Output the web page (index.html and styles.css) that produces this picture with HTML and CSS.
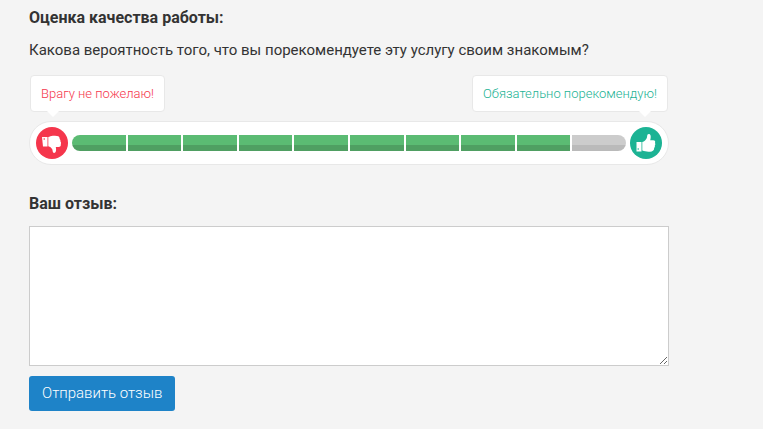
FILE: index.html
```html
<!DOCTYPE html>
<html lang="ru">
<head>
<meta charset="utf-8">
<meta name="viewport" content="width=device-width, initial-scale=1">
<title>Отзыв</title>
<link rel="stylesheet" href="styles.css">
</head>

<body>
<form class="review" action="#" method="post">
	<h2 class="review-title">Оценка качества работы:</h2>
	<p class="review-text" id="question">Какова вероятность того, что вы порекомендуете эту услугу своим знакомым?</p>

	<div class="hints">
		<span class="hint hint-bad">Врагу не пожелаю!</span>
		<span class="hint hint-good">Обязательно порекомендую!</span>
	</div>

	<div class="rate">
		<span class="thumb thumb-bad">
			<svg viewBox="0 0 32 32" width="32" height="32" aria-hidden="true">
				<path d="M6 10h5.500v9.500H7z"/>
				<path d="M12.300 10c1.500-.3 2.700-1.200 4.500-1.200 3 0 5.800 0 6.500 1.400.4.700.4 1.300.3 1.900.8.700 1 1.500.8 2.400.7.800.8 1.700.4 2.500.4 1.900-.6 2.900-2.300 2.900h-2.700c.3 1.600.5 3 0 4.700-.4 1.600-2.400 1.800-2.900.5-.4-1-.2-2-.8-3-.8-1.400-2-2.400-3.800-2.900z"/>
				<circle class="thumb-dot" cx="8.200" cy="12" r=".8"/>
			</svg>
		</span>
		<div class="scale" id="scale" role="radiogroup" aria-labelledby="question">
			<input class="scale-item active" type="radio" name="rate" value="1" aria-label="1">
			<input class="scale-item active" type="radio" name="rate" value="2" aria-label="2">
			<input class="scale-item active" type="radio" name="rate" value="3" aria-label="3">
			<input class="scale-item active" type="radio" name="rate" value="4" aria-label="4">
			<input class="scale-item active" type="radio" name="rate" value="5" aria-label="5">
			<input class="scale-item active" type="radio" name="rate" value="6" aria-label="6">
			<input class="scale-item active" type="radio" name="rate" value="7" aria-label="7">
			<input class="scale-item active" type="radio" name="rate" value="8" aria-label="8">
			<input class="scale-item active" type="radio" name="rate" value="9" aria-label="9" checked>
			<input class="scale-item" type="radio" name="rate" value="10" aria-label="10">
		</div>
		<span class="thumb thumb-good">
			<svg viewBox="0 0 32 32" width="32" height="32" aria-hidden="true">
				<path d="M6.500 15h5v9.500h-5z"/>
				<path d="M12.300 15c2.200-.8 3.700-2.200 4.500-4.100.5-1.200.2-2.300.8-3.300.7-1.100 2.500-.6 2.900.7.500 1.700.1 3.200-.3 4.900h3c1.800 0 2.400 1.300 1.800 2.800.5.900.4 1.800-.2 2.500.3 1-.1 1.900-.7 2.400.1.700 0 1.400-.4 2-.8 1.300-2.800 1.800-5.200 1.800-2.400 0-4.100-.6-6.200-1.200z"/>
				<circle class="thumb-dot" cx="8.200" cy="22" r=".8"/>
			</svg>
		</span>
	</div>

	<label class="review-title" for="message">Ваш отзыв:</label>
	<textarea class="review-message" id="message" name="message"></textarea>
	<button class="review-btn" type="submit">Отправить отзыв</button>
</form>

<script>
var items=document.querySelectorAll('.scale-item');
document.querySelector('#scale').onchange=function(e){
	for(var i=0;i<items.length;i++){
		items[i].classList.toggle('active',i<Number(e.target.value));
	}
};
</script>
</body>
</html>
```

FILE: styles.css
```css
body,h2,p{ margin:0; padding:0;}
body{ background:#f4f4f4; color:#333; font-family:Roboto,"Liberation Sans",sans-serif;}
.review{ box-sizing:border-box; max-width:698px; padding:8px 29px;}
.review-title{ display:block; font-size:16px; line-height:20px; font-weight:bold;}
.review-text{ margin-top:12px; font-size:15px; line-height:20px;}

/* подсказки над шкалой */
.hints{ display:flex; justify-content:space-between; margin-top:15px; padding:0 1px;}
.hint{ position:relative; padding:8px 10px; border:1px solid #e8e8e8; border-radius:4px; background:#fff; font-size:13px; line-height:19px; font-weight:300;}
.hint:after{ content:""; position:absolute; top:100%; border:6px solid transparent; border-top-color:#fff; border-bottom:0;}
.hint-bad{ color:#f5364c;}
.hint-bad:after{ left:16px;}
.hint-good{ color:#1cb394;}
.hint-good:after{ right:16px;}

/* шкала */
.rate{ display:flex; align-items:center; gap:4px; margin:9px 0 29px; padding:5px 6px; border:1px solid #e8e8e8; border-radius:22px; background:#fff;}
.thumb{ flex:none; width:32px; height:32px; border-radius:50%;}
.thumb svg{ display:block; fill:#fff;}
.thumb-bad{ background:#f5364c; color:#f5364c;}
.thumb-good{ background:#1cb394; color:#1cb394;}
.thumb-dot{ fill:currentColor;}
.scale{ flex:1; display:grid; grid-template-columns:repeat(10,1fr); gap:2px; border-radius:8px; overflow:hidden;}
.scale-item{ appearance:none; width:100%; height:16px; margin:0; background:linear-gradient(#ccc 10px,#bababa 10px); cursor:pointer;}
.scale-item.active{ background:linear-gradient(#5bbb73 10px,#4f9f62 10px);}

.review-message{ display:block; box-sizing:border-box; width:100%; height:140px; margin:12px 0 10px; padding:8px; border:1px solid #ccc; background:#fff; font:15px/20px Roboto,"Liberation Sans",sans-serif; resize:vertical;}
.review-btn{ display:block; padding:8px 13px; border:0; border-radius:3px; background:#1e83c8; color:#fff; font:300 15px/19px Roboto,"Liberation Sans",sans-serif; cursor:pointer;}
```
